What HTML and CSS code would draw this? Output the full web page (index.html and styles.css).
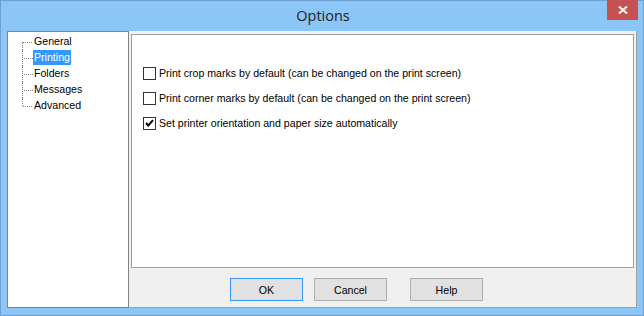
FILE: index.html
```html
<!DOCTYPE html>
<html>
	<head>
		<title>Options</title>
		<meta charset="UTF-8">
		<link rel="stylesheet" href="styles.css">
	</head>
	<body>
		<div class="window">
			<!-- 标题栏 -->
			<div class="titlebar">
				<span class="title">Options</span>
				<button class="close-btn">
					<svg width="10" height="8" viewBox="0 0 10 8">
						<path d="M1 0.5 L9 7.5 M9 0.5 L1 7.5" stroke="#fff" stroke-width="2"/>
					</svg>
				</button>
			</div>

			<div class="client">
				<!-- 左侧树 -->
				<ul class="tree">
					<li><span>General</span></li>
					<li><span class="selected">Printing</span></li>
					<li><span>Folders</span></li>
					<li><span>Messages</span></li>
					<li class="last"><span>Advanced</span></li>
				</ul>

				<!-- 右侧面板 -->
				<div class="pane">
					<div class="page">
						<label class="check-row">
							<span class="checkbox"></span>
							Print crop marks by default (can be changed on the print screen)
						</label>
						<label class="check-row">
							<span class="checkbox"></span>
							Print corner marks by default (can be changed on the print screen)
						</label>
						<label class="check-row">
							<span class="checkbox">
								<svg width="11" height="11" viewBox="0 0 11 11">
									<path d="M2 5 L4.3 7.5 L9 2.2" fill="none" stroke="#000" stroke-width="2"/>
								</svg>
							</span>
							Set printer orientation and paper size automatically
						</label>
					</div>
					<div class="buttons">
						<button class="btn default">OK</button>
						<button class="btn">Cancel</button>
						<button class="btn help">Help</button>
					</div>
				</div>
			</div>
		</div>
	</body>
</html>
```
FILE: styles.css
```css
* {
	margin: 0;
	padding: 0;
	box-sizing: border-box;
}

body {
	width: 644px;
	height: 316px;
	overflow: hidden;
	font-family: "Liberation Sans", Arial, sans-serif;
	font-size: 10.6px;
	color: #000;
}

/* 窗口外框 */
.window {
	width: 644px;
	height: 316px;
	background-color: #8cc6f7;
	border: 1px solid #6f9fd1;
	display: flex;
	flex-direction: column;
}

/* 标题栏 */
.titlebar {
	height: 30px;
	display: grid;
	grid-template-columns: 1fr auto;
	align-items: start;
}

.title {
	grid-column: 1 / 3;
	grid-row: 1;
	text-align: center;
	font-family: "Open Sans", "Noto Sans", sans-serif;
	font-size: 14.5px;
	line-height: 29px;
	color: #222;
	padding-left: 2px;
}

.close-btn {
	grid-column: 2;
	grid-row: 1;
	width: 31px;
	height: 20px;
	margin-right: 5px;
	margin-top: -1px;
	background-color: #c75050;
	border: none;
	display: flex;
	align-items: center;
	justify-content: center;
}

/* 主体区域 */
.client {
	flex: 1;
	display: flex;
	margin: 0 6px 7px 6px;
}

/* 树形列表 */
.tree {
	width: 122px;
	background-color: #fff;
	border-left: 1px solid #7d8590;
	border-top: 1px solid #7d8590;
	border-right: 1px solid #828282;
	border-bottom: 1px solid #828282;
	list-style: none;
	padding: 2px 0 0 14px;
}

.tree li {
	height: 16px;
	line-height: 15px;
	position: relative;
	padding-left: 10px;
	border-left: 1px dotted #808080;
}

.tree li::before {
	content: "";
	position: absolute;
	left: 1px;
	top: 8px;
	width: 9px;
	border-top: 1px dotted #808080;
}

.tree li:first-child,
.tree li.last {
	border-left: none;
	padding-left: 11px;
}

.tree li:first-child::after {
	content: "";
	position: absolute;
	left: 0;
	top: 8px;
	height: 8px;
	border-left: 1px dotted #808080;
}

.tree li.last::after {
	content: "";
	position: absolute;
	left: 0;
	top: 0;
	height: 8px;
	border-left: 1px dotted #808080;
}

.tree span {
	display: inline-block;
	padding: 0 1px;
}

.tree .selected {
	background-color: #3399ff;
	color: #fff;
}

/* 右侧面板 */
.pane {
	flex: 1;
	background-color: #f0f0f0;
	border-right: 1px solid #a0a0a0;
	border-bottom: 1px solid #a0a0a0;
	display: flex;
	flex-direction: column;
}

.page {
	height: 234px;
	margin: 3px 2px 0 2px;
	background-color: #fff;
	border: 1px solid #a0a0a0;
	padding: 32px 0 0 11px;
	display: flex;
	flex-direction: column;
	gap: 12px;
}

.check-row {
	display: flex;
	align-items: center;
	gap: 3px;
	height: 13px;
	line-height: 13px;
}

.checkbox {
	width: 13px;
	height: 13px;
	border: 1px solid #333;
	background-color: #fff;
	display: flex;
	align-items: center;
	justify-content: center;
}

/* 按钮区 */
.buttons {
	display: flex;
	padding: 10px 0 0 101px;
}

.btn {
	width: 73px;
	height: 23px;
	background-color: #e1e1e1;
	border: 1px solid #adadad;
	font-family: "Liberation Sans", Arial, sans-serif;
	font-size: 10.6px;
	color: #000;
	margin-right: 11px;
}

.btn.default {
	border-color: #3399ff;
}

.btn.help {
	margin-left: 12px;
}
```
